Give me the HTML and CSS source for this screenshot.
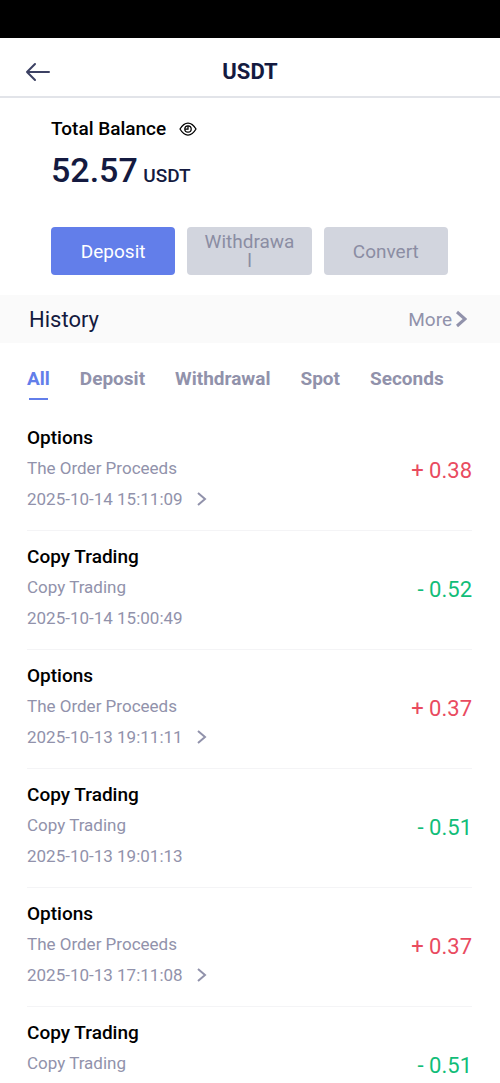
FILE: index.html
```html
<!DOCTYPE html>
<html lang="en">
<head>
<meta charset="utf-8">
<meta name="viewport" content="width=device-width, initial-scale=1">
<title>USDT</title>
<link rel="stylesheet" href="styles.css">
</head>
<body>
<div class="app">
  <div class="status-bar"></div>
  <header class="header">
    <button class="back" type="button" aria-label="Back">
      <svg class="back-icon" viewBox="0 0 26 20"><path d="M10 2 2 10l8 8M2 10h22"/></svg>
    </button>
    <h1 class="title">USDT</h1>
  </header>
  <main>
    <section class="balance">
      <div class="balance-label">
        <span>Total Balance</span>
        <button class="eye" type="button" aria-label="Hide balance">
          <svg class="eye-icon" viewBox="0 0 18 14"><path d="M1 7Q4.500 1 9 1t8 6q-3.500 6-8 6T1 7Z"/><circle cx="9" cy="7" r="3.200"/><path d="M9 4v3H6"/></svg>
        </button>
      </div>
      <p class="amount">52.57 <span class="unit">USDT</span></p>
      <div class="actions">
        <button class="action primary" type="button">Deposit</button>
        <button class="action" type="button">Withdrawal</button>
        <button class="action" type="button">Convert</button>
      </div>
    </section>
    <div class="history-bar">
      <h2 class="history-title">History</h2>
      <a class="more" href="#">More<svg class="more-icon" viewBox="0 0 12 18"><path d="m2 2 8 7-8 7"/></svg></a>
    </div>
    <nav class="tabs">
      <button class="tab active" type="button">All</button>
      <button class="tab" type="button">Deposit</button>
      <button class="tab" type="button">Withdrawal</button>
      <button class="tab" type="button">Spot</button>
      <button class="tab" type="button">Seconds</button>
    </nav>
    <ul class="list">
      <li class="item">
        <div><h3 class="name">Options</h3><p class="detail">The Order Proceeds</p><p class="detail date">2025-10-14 15:11:09 <svg class="chevron" viewBox="0 0 10 16"><path d="m1 2 7 6-7 6"/></svg></p></div>
        <span class="value up">+ 0.38</span>
      </li>
      <li class="item">
        <div><h3 class="name">Copy Trading</h3><p class="detail">Copy Trading</p><p class="detail date">2025-10-14 15:00:49</p></div>
        <span class="value down">- 0.52</span>
      </li>
      <li class="item">
        <div><h3 class="name">Options</h3><p class="detail">The Order Proceeds</p><p class="detail date">2025-10-13 19:11:11 <svg class="chevron" viewBox="0 0 10 16"><path d="m1 2 7 6-7 6"/></svg></p></div>
        <span class="value up">+ 0.37</span>
      </li>
      <li class="item">
        <div><h3 class="name">Copy Trading</h3><p class="detail">Copy Trading</p><p class="detail date">2025-10-13 19:01:13</p></div>
        <span class="value down">- 0.51</span>
      </li>
      <li class="item">
        <div><h3 class="name">Options</h3><p class="detail">The Order Proceeds</p><p class="detail date">2025-10-13 17:11:08 <svg class="chevron" viewBox="0 0 10 16"><path d="m1 2 7 6-7 6"/></svg></p></div>
        <span class="value up">+ 0.37</span>
      </li>
      <li class="item">
        <div><h3 class="name">Copy Trading</h3><p class="detail">Copy Trading</p></div>
        <span class="value down">- 0.51</span>
      </li>
    </ul>
  </main>
</div>
</body>
</html>
```

FILE: styles.css
```css
* { box-sizing: border-box; margin: 0; padding: 0; }
body { font-family: Roboto, "Liberation Sans", sans-serif; background: #fff; color: #000; }
button { border: 0; background: none; font: inherit; color: inherit; cursor: pointer; }
svg { display: block; fill: none; stroke: currentColor; }
.app { height: 100vh; overflow: hidden; }
.status-bar { height: 38px; background: #000; }
.header {
  display: grid; grid-template-columns: 52px 1fr 52px; align-items: center;
  height: 60px; border-bottom: 2px solid #e2e4e9; padding-top: 9px;
}
.back { padding-left: 25px; color: #3c4163; }
.back-icon { width: 26px; height: 20px; stroke-width: 2; stroke-linecap: round; stroke-linejoin: round; }
.title { font-size: 22px; line-height: 26px; font-weight: 700; text-align: center; color: #141a40; }
.balance { padding: 20px 52px 20px 51px; }
.balance-label { display: flex; align-items: center; gap: 13px; font-size: 19px; line-height: 22px; font-weight: 500; }
.eye-icon { width: 18px; height: 14px; stroke-width: 1.25; }
.amount { margin-top: 8px; font-size: 34px; line-height: 44px; font-weight: 500; color: #141a40; }
.unit { margin-left: -3px; font-size: 19px; }
.actions { display: grid; grid-template-columns: repeat(3, 1fr); gap: 12px; margin-top: 29px; }
.action {
  height: 48px; padding: 0 15px; border-radius: 4px; background: #d2d5de; color: #8b8da3;
  font-size: 19px; line-height: 19px; overflow-wrap: anywhere;
}
.primary { background: #627eea; color: #fff; }
.history-bar { display: flex; justify-content: space-between; align-items: center; height: 48px; padding: 0 33px 0 29px; background: #fafafa; }
.history-title { font-size: 22px; font-weight: 400; color: #141a40; }
.more { display: flex; align-items: center; gap: 3px; color: #9192ab; font-size: 19px; text-decoration: none; }
.more-icon { width: 12px; height: 18px; stroke-width: 3; }
.tabs { display: flex; gap: 30px; padding: 25px 27px 0; color: #9192ab; font-size: 19px; line-height: 22px; font-weight: 700; }
.tab { padding-bottom: 11px; }
.active { color: #627eea; }
.active::after { content: ""; display: block; width: 19px; height: 2px; margin: 8px auto -10px; background: currentColor; }
.list { list-style: none; padding: 0 28px 0 27px; }
.item { display: flex; justify-content: space-between; align-items: flex-start; height: 119px; padding-top: 15px; border-bottom: 1px solid #f4f4f6; }
.item:first-child { height: 130px; padding-top: 26px; }
.name { font-size: 19px; line-height: 22px; font-weight: 500; }
.detail { display: flex; align-items: center; gap: 14px; margin-top: 8px; color: #9192ab; font-size: 17px; line-height: 22px; }
.date { margin-top: 9px; }
.chevron { width: 10px; height: 16px; stroke-width: 2; }
.value { margin-top: 31px; font-size: 22px; line-height: 26px; }
.up { color: #e94b5f; }
.down { color: #11bd78; }
```
